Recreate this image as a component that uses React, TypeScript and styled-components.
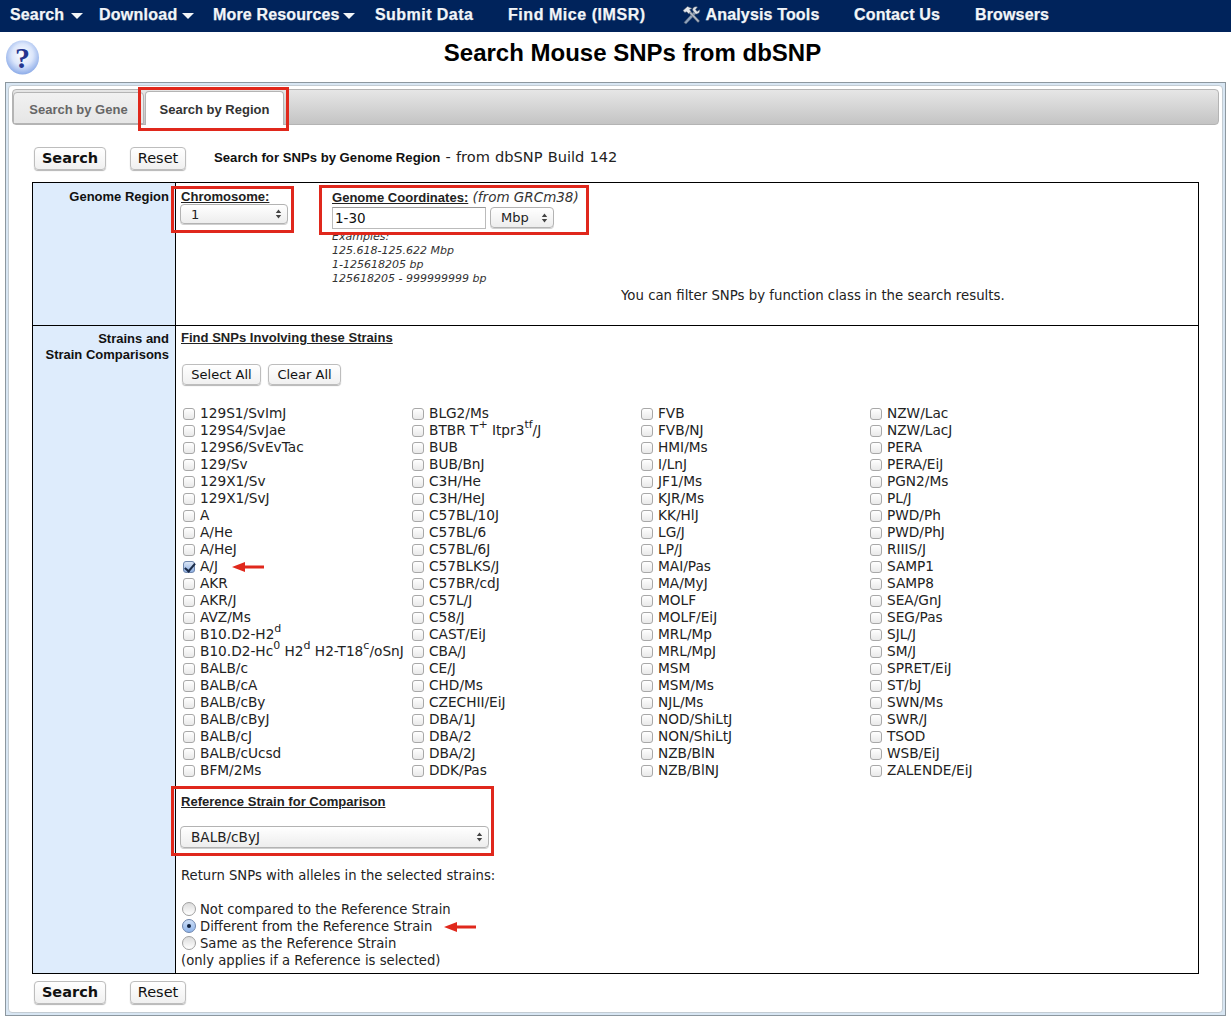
import React from 'react';
import styled, { createGlobalStyle } from 'styled-components';

const GlobalStyle = createGlobalStyle`
  html, body {
    margin: 0;
    background: #fff;
    font-family: "DejaVu Sans", Verdana, sans-serif;
    font-size: 13.2px;
    color: #222;
  }
`;

const Nav = styled.nav`
  display: flex;
  align-items: center;
  height: 32px;
  padding-left: 10px;
  background: #00235b;
  color: #f2f5f8;
  font: bold 16px/30px "Liberation Sans", Arial, sans-serif;
  -webkit-text-stroke: 0.25px #f2f5f8;
  padding-bottom: 2px;
  box-sizing: border-box;
`;

const NavItem = styled.span<{ $width: number; $spacing?: number }>`
  display: inline-flex;
  align-items: center;
  width: ${(p) => p.$width}px;
  letter-spacing: ${(p) => p.$spacing ?? 0.15}px;
  flex: none;
  white-space: nowrap;
`;

const Caret = styled.i<{ $gap: number }>`
  width: 0;
  height: 0;
  margin-left: ${(p) => p.$gap}px;
  margin-top: 2px;
  border-left: 6px solid transparent;
  border-right: 6px solid transparent;
  border-top: 6px solid #f2f5f8;
  -webkit-text-stroke: 0;
`;

const TitleRow = styled.header`
  display: flex;
  align-items: center;
  height: 50px;
  padding-left: 5px;
`;

const Title = styled.h1`
  flex: 1;
  margin: 0 6px 8px 0;
  text-align: center;
  color: #000;
  font: bold 24px/30px "Liberation Sans", Arial, sans-serif;
`;

const Frame = styled.main`
  margin: 0 5px;
  height: 934px;
  box-sizing: border-box;
  padding: 2px;
  border: 1px solid #8c979f;
  background: #d8e6f3;
`;

const Panel = styled.div`
  height: 100%;
  box-sizing: border-box;
  padding: 3px 3px 0;
  background: #fff;
  border: 1px solid #c3ccd3;
  border-radius: 4px;
`;

const TabBar = styled.div`
  display: flex;
  align-items: flex-end;
  height: 36px;
  box-sizing: border-box;
  border: 1px solid #b4b4b4;
  border-radius: 4px;
  background: linear-gradient(#e6e6e6, #c4c4c4);
`;

const Tab = styled.div<{ $active?: boolean }>`
  position: relative;
  display: flex;
  align-items: center;
  justify-content: center;
  height: ${(p) => (p.$active ? 34 : 32)}px;
  width: ${(p) => (p.$active ? 139 : 131)}px;
  padding-top: 2px;
  margin-right: 1px;
  margin-bottom: ${(p) => (p.$active ? -1 : 0)}px;
  box-sizing: border-box;
  border: 1px solid #b4b4b4;
  border-bottom: ${(p) => (p.$active ? 'none' : '1px solid #b4b4b4')};
  border-radius: 4px 4px 0 0;
  background: ${(p) => (p.$active ? '#fff' : 'linear-gradient(#f1f1f1, #e6e6e6)')};
  color: ${(p) => (p.$active ? '#333' : '#666')};
  font: bold 13px "Liberation Sans", Arial, sans-serif;
`;

const Highlight = styled.div<{ $inset: string }>`
  position: relative;
  &::after {
    content: '';
    position: absolute;
    inset: ${(p) => p.$inset};
    border: 3px solid #e0281c;
    pointer-events: none;
  }
`;

const TabMark = styled.div`
  position: absolute;
  inset: -5px -6px -6px -8px;
  border: 3px solid #e0281c;
  pointer-events: none;
`;

const ActionRow = styled.div<{ $top: number }>`
  display: flex;
  align-items: center;
  padding: ${(p) => p.$top}px 0 0 22px;
  height: 24px;
`;

const Button = styled.button<{ $primary?: boolean; $width: number }>`
  width: ${(p) => p.$width}px;
  height: 23px;
  padding: 0;
  border: 1px solid #bdbdbd;
  border-radius: 4px;
  box-shadow: 0 1px 1px #b5b5b5;
  background: linear-gradient(#ffffff, #f0f0f0);
  color: #111;
  font-family: "DejaVu Sans", Verdana, sans-serif;
  font-size: 14.5px;
  font-weight: ${(p) => (p.$primary ? 700 : 400)};
  flex: none;
`;

const ResetButton = styled(Button)`
  margin-left: 24px;
`;

const Caption = styled.div`
  margin: -4px 0 0 28px;
  font-size: 14.6px;
  word-spacing: 0.5px;
  color: #222;
`;

const CaptionBold = styled.b`
  font: bold 13.15px "Liberation Sans", Arial, sans-serif;
  word-spacing: 0;
  color: #111;
`;

const Table = styled.table`
  width: 1167px;
  margin: 12px 0 0 20px;
  border-collapse: collapse;
  border: 1px solid #000;
  table-layout: fixed;
`;

const LabelCell = styled.th<{ $top: number }>`
  width: 143px;
  box-sizing: border-box;
  padding: ${(p) => p.$top}px 6px 0 0;
  vertical-align: top;
  text-align: right;
  background: #deecfc;
  border: 1px solid #000;
  color: #111;
  font: bold 13px/16px "Liberation Sans", Arial, sans-serif;
`;

const BodyCell = styled.td<{ $height: number }>`
  height: ${(p) => p.$height}px;
  box-sizing: border-box;
  padding: 0 0 0 5px;
  vertical-align: top;
  border: 1px solid #000;
`;

const RegionRow = styled.div`
  display: flex;
  align-items: flex-start;
  padding-top: 6px;
`;

const ChromoCol = styled(Highlight)`
  width: 151px;
  flex: none;
`;

const Heading = styled.div`
  font: bold 13.05px/16px "Liberation Sans", Arial, sans-serif;
  color: #222;
  text-decoration: underline;
`;

const StrainHeading = styled(Heading)`
  margin-top: 4px;
`;

const SelectBox = styled.div<{ $width: number }>`
  position: relative;
  display: flex;
  align-items: center;
  flex: none;
  width: ${(p) => p.$width}px;
  height: 21px;
  box-sizing: border-box;
  padding-left: 10px;
  border: 1px solid #b3b3b3;
  border-radius: 4px;
  background: linear-gradient(#ffffff, #ededed);
  box-shadow: 0 1px 0 #d0d0d0;
  font-size: 13.6px;
  color: #222;
`;

const UpDown = styled.svg`
  position: absolute;
  right: 5px;
  top: 50%;
  margin-top: -5px;
  width: 7px;
  height: 10px;
`;

const ChromoSelect = styled(SelectBox)`
  margin: -1px 0 0 -1px;
  width: 108px;
  height: 20px;
  font-size: 13px;
`;

const CoordField = styled.div`
  display: flex;
  gap: 4px;
  margin-top: 1px;
`;

const CoordInput = styled.input`
  width: 154px;
  height: 22px;
  box-sizing: border-box;
  padding: 0 2px;
  border: 1px solid #bbb;
  border-top-color: #999;
  font: 13.5px "DejaVu Sans", Verdana, sans-serif;
  color: #111;
  outline: none;
`;

const UnitSelect = styled(SelectBox)`
  font-size: 13px;
`;

const CoordNote = styled.em`
  font: italic 13.5px "DejaVu Sans", Verdana, sans-serif;
  color: #333;
`;

const Examples = styled.div`
  margin-top: 1px;
  font: italic 11px/14px "DejaVu Sans", Verdana, sans-serif;
  color: #333;
`;

const FilterNote = styled.div`
  margin: 2px 0 0 440px;
  font-size: 13.3px;
  line-height: 16px;
`;

const StrainActions = styled.div`
  display: flex;
  gap: 7px;
  margin: 18px 0 0 1px;
`;

const SmallButton = styled(Button)`
  height: 21px;
  font-size: 13px;
`;

const StrainGrid = styled.div`
  display: grid;
  grid-template-columns: repeat(4, 229px);
  grid-template-rows: repeat(22, 17px);
  grid-auto-flow: column;
  margin: 20px 0 0 2px;
  font-size: 13.7px;
`;

const StrainLabel = styled.label`
  display: flex;
  align-items: center;
  height: 17px;
  white-space: nowrap;
  line-height: 17px;

  sup {
    font-size: 11px;
    line-height: 0;
    position: relative;
    top: -1px;
    vertical-align: super;
  }
`;

const Check = styled.input`
  appearance: none;
  position: relative;
  flex: none;
  width: 12px;
  height: 12px;
  margin: 0 5px 0 0;
  border: 1px solid #a8a8a8;
  border-radius: 3px;
  background: linear-gradient(#ffffff, #e9e9e9);

  &:checked {
    border-color: #6f86ad;
    background: linear-gradient(#dbe6f6, #8fb0e3);
  }

  &:checked::after {
    content: '';
    position: absolute;
    left: 3px;
    top: -1px;
    width: 4px;
    height: 9px;
    border: solid #1b2b48;
    border-width: 0 2px 2px 0;
    transform: rotate(40deg);
  }
`;

const Arrow = styled.svg<{ $gap: number }>`
  width: 32px;
  height: 10px;
  margin-left: ${(p) => p.$gap}px;
  flex: none;
`;

const ReferenceBlock = styled(Highlight)`
  margin-top: 15px;
`;

const RefSelect = styled(SelectBox)`
  width: 309px;
  height: 22px;
  margin: 16px 0 0 -1px;
`;

const ReturnNote = styled.div`
  margin-top: 19px;
  line-height: 17px;
`;

const RadioList = styled.div`
  margin-top: 17px;
  line-height: 17px;
`;

const Radio = styled.input`
  appearance: none;
  position: relative;
  flex: none;
  width: 14px;
  height: 14px;
  margin: -2px 4px 0 1px;
  border: 1px solid #a0a0a0;
  border-radius: 50%;
  background: linear-gradient(#dcdcdc, #ffffff);

  &:checked {
    border-color: #6f86ad;
    background: linear-gradient(#cfe0f7, #8fb4ea);
  }

  &:checked::after {
    content: '';
    position: absolute;
    left: 4px;
    top: 4px;
    width: 4px;
    height: 4px;
    border-radius: 50%;
    background: #10203c;
  }
`;

const columns = [
  ['129S1/SvImJ', '129S4/SvJae', '129S6/SvEvTac', '129/Sv', '129X1/Sv', '129X1/SvJ', 'A', 'A/He', 'A/HeJ', 'A/J', 'AKR', 'AKR/J', 'AVZ/Ms', 'B10.D2-H2^d', 'B10.D2-Hc^0 H2^d H2-T18^c/oSnJ', 'BALB/c', 'BALB/cA', 'BALB/cBy', 'BALB/cByJ', 'BALB/cJ', 'BALB/cUcsd', 'BFM/2Ms'],
  ['BLG2/Ms', 'BTBR T^+ Itpr3^tf/J', 'BUB', 'BUB/BnJ', 'C3H/He', 'C3H/HeJ', 'C57BL/10J', 'C57BL/6', 'C57BL/6J', 'C57BLKS/J', 'C57BR/cdJ', 'C57L/J', 'C58/J', 'CAST/EiJ', 'CBA/J', 'CE/J', 'CHD/Ms', 'CZECHII/EiJ', 'DBA/1J', 'DBA/2', 'DBA/2J', 'DDK/Pas'],
  ['FVB', 'FVB/NJ', 'HMI/Ms', 'I/LnJ', 'JF1/Ms', 'KJR/Ms', 'KK/HlJ', 'LG/J', 'LP/J', 'MAI/Pas', 'MA/MyJ', 'MOLF', 'MOLF/EiJ', 'MRL/Mp', 'MRL/MpJ', 'MSM', 'MSM/Ms', 'NJL/Ms', 'NOD/ShiLtJ', 'NON/ShiLtJ', 'NZB/BlN', 'NZB/BlNJ'],
  ['NZW/Lac', 'NZW/LacJ', 'PERA', 'PERA/EiJ', 'PGN2/Ms', 'PL/J', 'PWD/Ph', 'PWD/PhJ', 'RIIIS/J', 'SAMP1', 'SAMP8', 'SEA/GnJ', 'SEG/Pas', 'SJL/J', 'SM/J', 'SPRET/EiJ', 'ST/bJ', 'SWN/Ms', 'SWR/J', 'TSOD', 'WSB/EiJ', 'ZALENDE/EiJ'],
];

// "T^+" style names: the token after ^ runs up to a space or slash
const renderName = (name: string) =>
  name.split(/(\^[^ /]+)/).map((part, i) =>
    part.startsWith('^') ? <sup key={i}>{part.slice(1)}</sup> : <React.Fragment key={i}>{part.replace(/ /g, '\u00a0')}</React.Fragment>
  );

const Arrows = () => (
  <UpDown viewBox="0 0 7 10">
    <path d="M3.5 0.5 L6.2 4 L0.8 4 Z M3.5 9.5 L0.8 6 L6.2 6 Z" fill="#444" />
  </UpDown>
);

const RedArrow = ({ gap }: { gap: number }) => (
  <Arrow $gap={gap} viewBox="0 0 32 10">
    <path d="M0 5 L13 0 L13 3.6 L32 3.6 L32 6.4 L13 6.4 L13 10 Z" fill="#e0281c" />
  </Arrow>
);

const HelpIcon = () => (
  <svg width="35" height="35" viewBox="0 0 35 35">
    <defs>
      <radialGradient id="help" cx="50%" cy="42%" r="58%">
        <stop offset="0%" stopColor="#ffffff" />
        <stop offset="55%" stopColor="#dbe6fb" />
        <stop offset="100%" stopColor="#8cabe8" />
      </radialGradient>
    </defs>
    <ellipse cx="17.5" cy="17.5" rx="16.5" ry="17" fill="url(#help)" />
    <text x="17.5" y="28" textAnchor="middle" fontFamily="'Liberation Serif', serif" fontWeight="bold" fontSize="30" fill="#25368f">?</text>
  </svg>
);

const ToolsIcon = () => (
  <svg width="20" height="20" viewBox="0 0 20 20">
    <path d="M3 17.5 L13 6.5 L15 8.5 L5 19 Z" fill="#8fa3bf" stroke="#56616f" strokeWidth="0.6" />
    <path d="M11.5 5 C11.5 2.5 14 1 16.5 2 L14.5 4.5 L16 6.5 L18.7 4.8 C19.2 7.5 17 9.6 14.4 8.8 Z" fill="#dfe3e8" stroke="#56616f" strokeWidth="0.5" />
    <path d="M17 17.5 L8 8 L9.8 6.4 L18.6 16 Z" fill="#aeb6c1" stroke="#56616f" strokeWidth="0.5" />
    <path d="M2 5.5 L6.5 1.5 L11 3.5 L8.6 4.6 L10 6.5 L7.6 8.8 L5.8 6.8 L3.8 7.4 Z" fill="#e4e7ec" stroke="#56616f" strokeWidth="0.5" />
  </svg>
);

const Strain = ({ name }: { name: string }) => (
  <StrainLabel>
    <Check type="checkbox" defaultChecked={name === 'A/J'} />
    <span>{renderName(name)}</span>
    {name === 'A/J' && <RedArrow gap={14} />}
  </StrainLabel>
);

export default function App() {
  return (
    <>
      <GlobalStyle />
      <Nav>
        <NavItem $width={89}>Search<Caret $gap={7} /></NavItem>
        <NavItem $width={114} $spacing={0.25}>Download<Caret $gap={5} /></NavItem>
        <NavItem $width={162}>More Resources<Caret $gap={3} /></NavItem>
        <NavItem $width={133} $spacing={0.45}>Submit Data</NavItem>
        <NavItem $width={173} $spacing={0.55}>Find Mice (IMSR)</NavItem>
        <NavItem $width={173}><ToolsIcon />&nbsp;Analysis Tools</NavItem>
        <NavItem $width={121}>Contact Us</NavItem>
        <NavItem $width={80}>Browsers</NavItem>
      </Nav>
      <TitleRow>
        <HelpIcon />
        <Title>Search Mouse SNPs from dbSNP</Title>
      </TitleRow>
      <Frame>
        <Panel>
          <TabBar>
            <Tab>Search by Gene</Tab>
            <Tab $active>
              Search by Region
              <TabMark />
            </Tab>
          </TabBar>
          <ActionRow $top={21}>
            <Button $primary $width={72}>Search</Button>
            <ResetButton $width={56}>Reset</ResetButton>
            <Caption><CaptionBold>Search for SNPs by Genome Region</CaptionBold> - from dbSNP Build 142</Caption>
          </ActionRow>
          <Table>
            <tbody>
              <tr>
                <LabelCell $top={6}>Genome Region</LabelCell>
                <BodyCell $height={143}>
                  <RegionRow>
                    <ChromoCol $inset="-3px 38px -9px -10px">
                      <Heading>Chromosome:</Heading>
                      <ChromoSelect $width={108}>1<Arrows /></ChromoSelect>
                    </ChromoCol>
                    <div>
                      <Highlight $inset="-4px -10px -6px -13px">
                        <Heading as="span">Genome Coordinates:</Heading>
                        <CoordNote> (from GRCm38)</CoordNote>
                        <CoordField>
                          <CoordInput defaultValue="1-30" />
                          <UnitSelect $width={64}>Mbp<Arrows /></UnitSelect>
                        </CoordField>
                      </Highlight>
                      <Examples>
                        Examples:<br />
                        125.618-125.622 Mbp<br />
                        1-125618205 bp<br />
                        125618205 - 999999999 bp
                      </Examples>
                    </div>
                  </RegionRow>
                  <FilterNote>You can filter SNPs by function class in the search results.</FilterNote>
                </BodyCell>
              </tr>
              <tr>
                <LabelCell $top={5}>Strains and<br />Strain Comparisons</LabelCell>
                <BodyCell $height={648}>
                  <StrainHeading>Find SNPs Involving these Strains</StrainHeading>
                  <StrainActions>
                    <SmallButton $width={79}>Select All</SmallButton>
                    <SmallButton $width={73}>Clear All</SmallButton>
                  </StrainActions>
                  <StrainGrid>
                    {columns.flat().map((name) => <Strain key={name} name={name} />)}
                  </StrainGrid>
                  <ReferenceBlock $inset="-8px 704px -8px -10px">
                    <Heading>Reference Strain for Comparison</Heading>
                    <RefSelect $width={309}>BALB/cByJ<Arrows /></RefSelect>
                  </ReferenceBlock>
                  <ReturnNote>Return SNPs with alleles in the selected strains:</ReturnNote>
                  <RadioList>
                    <StrainLabel><Radio type="radio" name="cmp" />Not compared to the Reference Strain</StrainLabel>
                    <StrainLabel><Radio type="radio" name="cmp" defaultChecked />Different from the Reference Strain<RedArrow gap={12} /></StrainLabel>
                    <StrainLabel><Radio type="radio" name="cmp" />Same as the Reference Strain</StrainLabel>
                    <StrainLabel>(only applies if a Reference is selected)</StrainLabel>
                  </RadioList>
                </BodyCell>
              </tr>
            </tbody>
          </Table>
          <ActionRow $top={6}>
            <Button $primary $width={72}>Search</Button>
            <ResetButton $width={56}>Reset</ResetButton>
          </ActionRow>
        </Panel>
      </Frame>
    </>
  );
}
